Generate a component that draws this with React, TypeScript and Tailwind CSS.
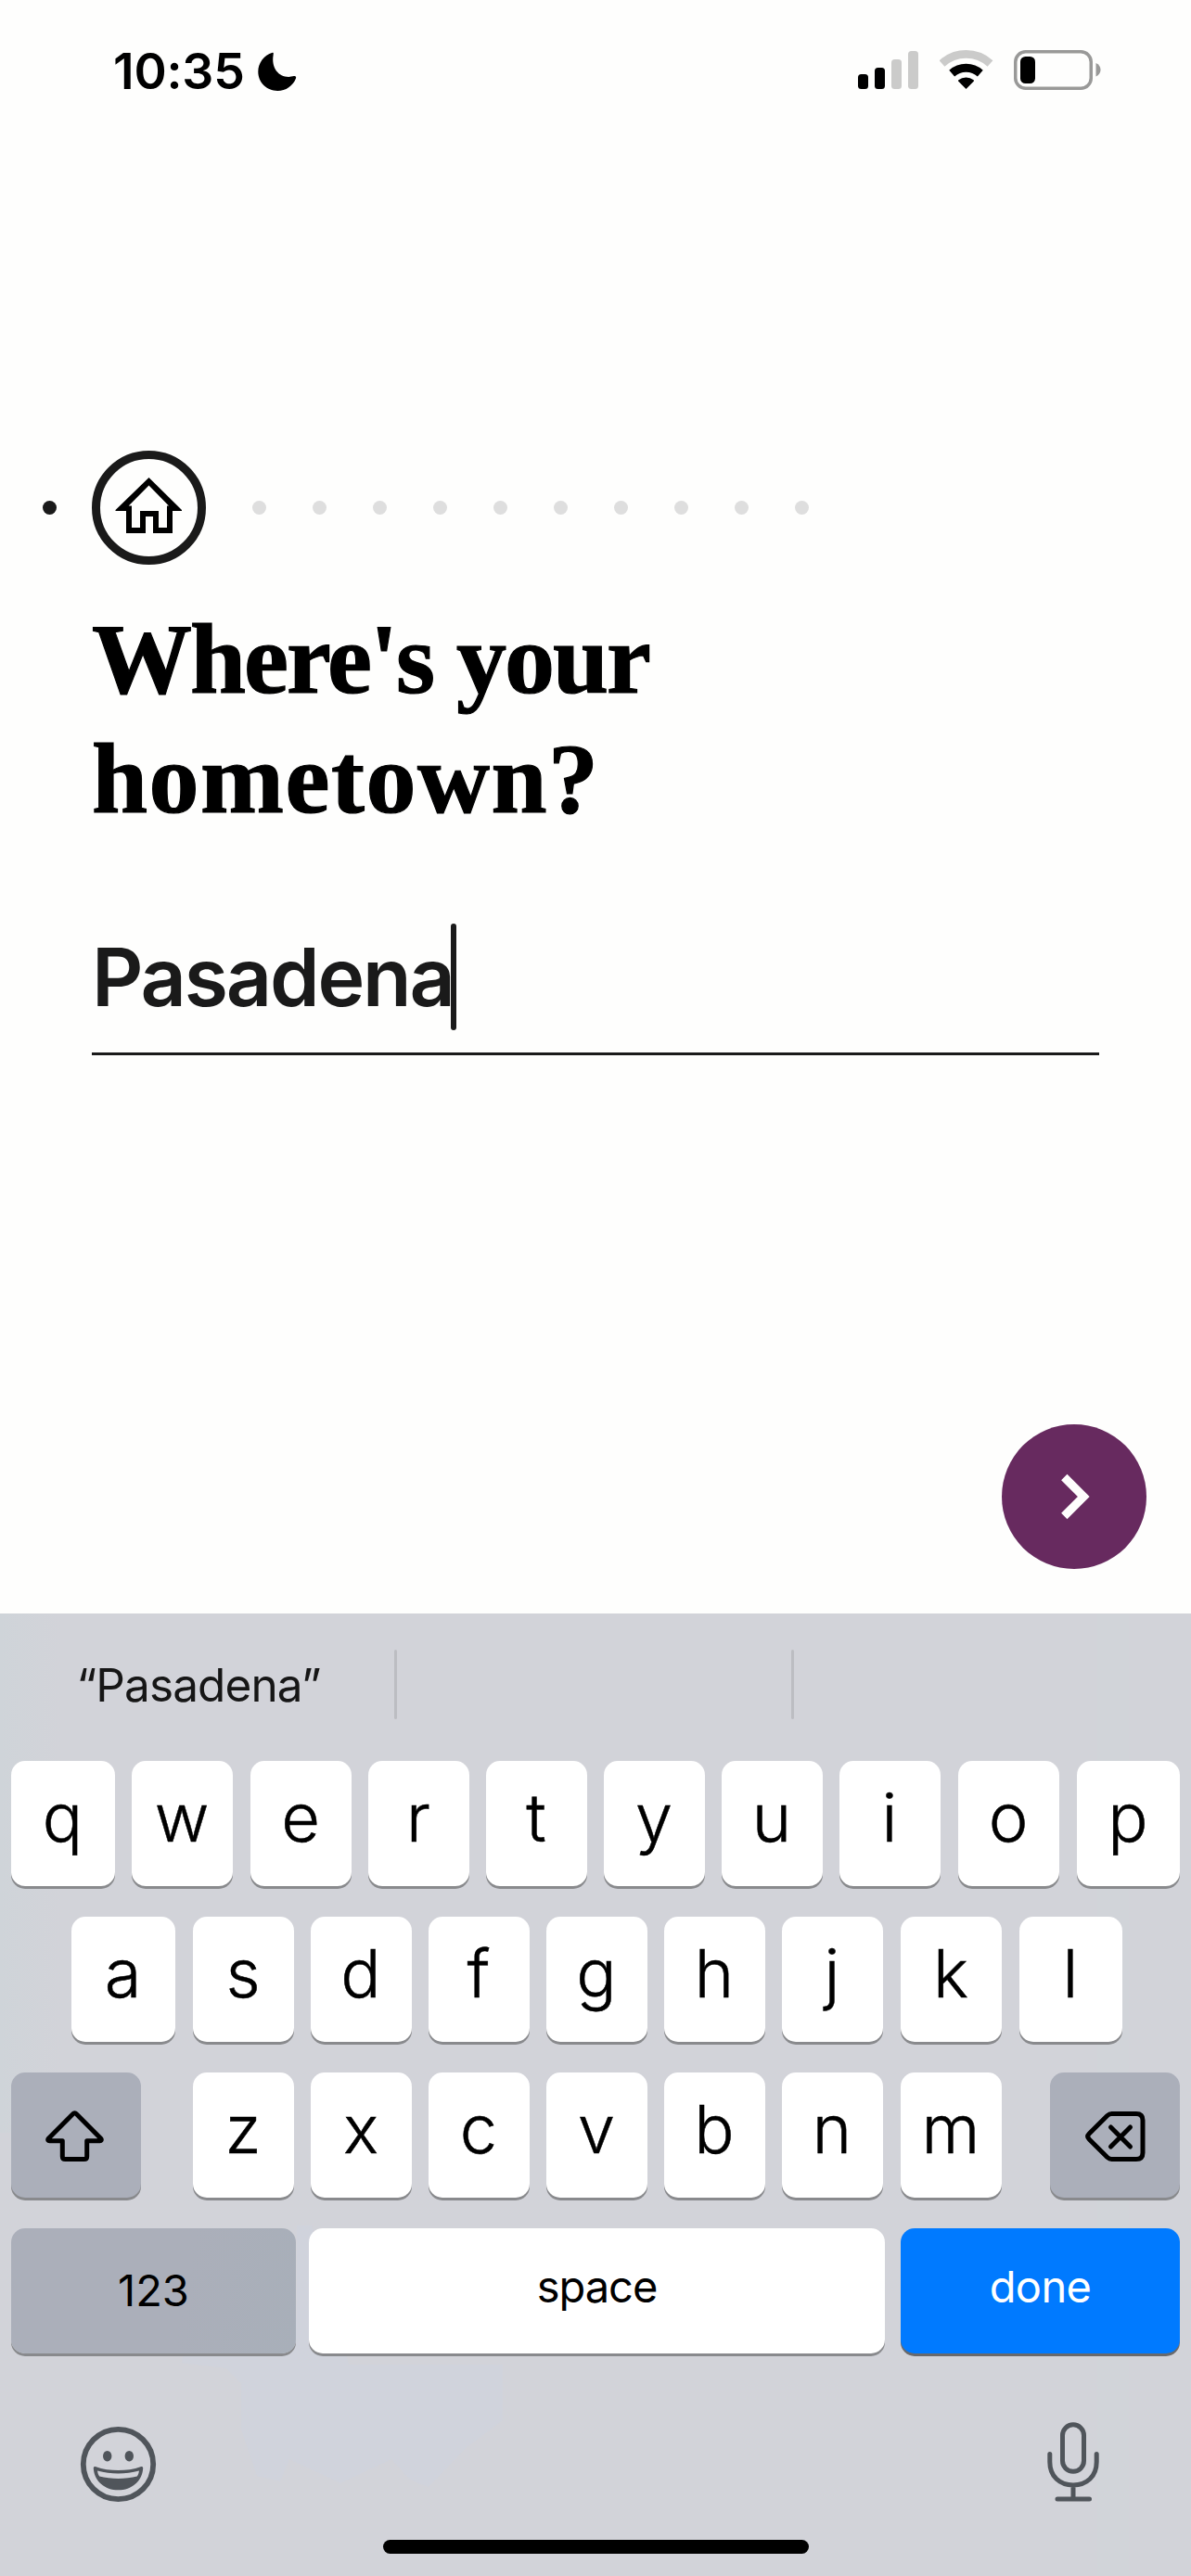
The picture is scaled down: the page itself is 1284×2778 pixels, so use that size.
import React from "react";

type KeyDef = { label: string; cls: string };

const ROW_ONE: KeyDef[] = [
  { label: "q", cls: "w-[112px]" },
  { label: "w", cls: "ml-[18px] w-[109px]" },
  { label: "e", cls: "ml-[19px] w-[109px]" },
  { label: "r", cls: "ml-[18px] w-[109px]" },
  { label: "t", cls: "ml-[18px] w-[109px]" },
  { label: "y", cls: "ml-[18px] w-[109px]" },
  { label: "u", cls: "ml-[18px] w-[109px]" },
  { label: "i", cls: "ml-[18px] w-[109px]" },
  { label: "o", cls: "ml-[19px] w-[109px]" },
  { label: "p", cls: "ml-[19px] w-[111px]" },
];

const ROW_TWO: KeyDef[] = [
  { label: "a", cls: "w-[112px]" },
  { label: "s", cls: "ml-[19px] w-[109px]" },
  { label: "d", cls: "ml-[18px] w-[109px]" },
  { label: "f", cls: "ml-[18px] w-[109px]" },
  { label: "g", cls: "ml-[18px] w-[109px]" },
  { label: "h", cls: "ml-[18px] w-[109px]" },
  { label: "j", cls: "ml-[18px] w-[109px]" },
  { label: "k", cls: "ml-[19px] w-[109px]" },
  { label: "l", cls: "ml-[19px] w-[111px]" },
];

const ROW_THREE: KeyDef[] = [
  { label: "z", cls: "ml-[56px] w-[109px]" },
  { label: "x", cls: "ml-[18px] w-[109px]" },
  { label: "c", cls: "ml-[18px] w-[109px]" },
  { label: "v", cls: "ml-[18px] w-[109px]" },
  { label: "b", cls: "ml-[18px] w-[109px]" },
  { label: "n", cls: "ml-[18px] w-[109px]" },
  { label: "m", cls: "ml-[19px] w-[109px]" },
];

const KEY_BASE = "h-[135px] shrink-0 rounded-[15px] shadow-[0_3px_0_#898a8d] text-center";

function LetterKey({ label, cls }: KeyDef) {
  return (
    <button className={`${KEY_BASE} flex items-start justify-center bg-white pr-px text-[72px] leading-[121px] font-light text-black [-webkit-text-stroke:0.5px_#000] ${cls}`}>
      {label}
    </button>
  );
}

function StatusBar() {
  return (
    <header className="flex h-[153px] items-start">
      <div className="ml-[122px] w-[156px] text-[53.5px] leading-[153px] font-semibold tracking-[-0.2px] whitespace-nowrap text-black">
        10:35
      </div>
      <svg className="mt-[56px]" width="42" height="43" viewBox="0 0 42 43">
        <path
          d="M15.8.8C6.500 3.600.3 12 .3 21.300.3 33 9.600 42 21.300 42c8.700 0 16.600-5.600 19.700-13.600.7-1.800-.6-2.800-2.200-2.300-13.600 3.800-24.800-6.400-22.200-22.600C16.900 1.500 17 .4 15.800.8Z"
          fill="#000"
        />
      </svg>
      <svg className="mt-[55px] ml-[605px]" width="65" height="41" viewBox="0 0 65 41">
        <rect x="0" y="25" width="11" height="16" rx="3.500" fill="#000" />
        <rect x="18" y="18" width="11" height="23" rx="3.500" fill="#000" />
        <rect x="36" y="9" width="11" height="32" rx="3.500" fill="#cbcbca" />
        <rect x="54" y="0" width="11" height="41" rx="3.500" fill="#cbcbca" />
      </svg>
      <svg className="mt-[54px] ml-[23px]" width="58" height="43" viewBox="0 0 58 43">
        <path d="M2.500 15.500A38.500 38.500 0 0 1 54.500 15.500" fill="none" stroke="#cbcbca" strokeWidth="8.600" transform="translate(0 -1)" />
        <path d="M13.200 25.800A23 23 0 0 1 43.800 25.800" fill="none" stroke="#000" strokeWidth="8.800" transform="translate(0 -.7)" />
        <path d="M28.500 42 20.300 33.800a1 1 0 0 1 .1-1.500 13 13 0 0 1 16.200 0 1 1 0 0 1 .1 1.500Z" fill="#000" />
      </svg>
      <svg className="mt-[54px] ml-[22px]" width="95" height="43" viewBox="0 0 95 43">
        <rect x="1.750" y="1.750" width="81.500" height="39.500" rx="11" fill="none" stroke="#999998" strokeWidth="3.500" />
        <rect x="7" y="7" width="16" height="29" rx="5.500" fill="#000" />
        <path d="M88.500 14c3.200 1.200 5 4.100 5 7.300s-1.800 6-5 7.200Z" fill="#999998" />
      </svg>
    </header>
  );
}

function Progress() {
  return (
    <div className="mt-[333px] flex h-[123px] items-center pl-[46px]">
      <span className="size-[15px] rounded-full bg-[#1a1a1a]" />
      <div className="ml-[38px] size-[123px] rounded-full border-[9px] border-[#1a1a1a]">
        <svg className="-m-[9px] max-w-none" width="123" height="123" viewBox="0 0 123 123">
          <path
            fillRule="evenodd"
            fill="#000"
            d="M61.500 29 97 64v1H87v24H66V71h-8v18H37V65H25.500v-1ZM61.500 37.500 39.700 59.500H43V83h9V65h20v18h9V59.500h2Z"
          />
        </svg>
      </div>
      <div className="ml-[50px] flex gap-[50px]">
        {Array.from({ length: 10 }, (_, i) => (
          <span key={i} className="size-[15px] rounded-full bg-[#dedede]" />
        ))}
      </div>
    </div>
  );
}

function Keyboard() {
  return (
    <section className="relative h-[1038px] shrink-0 bg-[#d2d3d9]">
      <svg className="absolute inset-0" width="1284" height="1038" viewBox="0 0 1284 1038">
        <defs>
          <linearGradient id="edge" x1="0" x2="1">
            <stop offset="0" stopColor="#cfd4d9" />
            <stop offset="1" stopColor="#d2d3d9" />
          </linearGradient>
        </defs>
        <rect width="66" height="560" fill="url(#edge)" />
        <rect x="1183" width="34" height="1038" fill="#d1d4d9" />
        <path d="M320 660h16l40 150h166v60l-40 30-40 42-20-8-20-22-55 26-55-26-10 24-25-6-17-50v-50l-16-16-48-6 4-20 20-28h100Z" fill="#d0d3dc" />
      </svg>
      <div className="relative">
        <div className="flex h-[159px] items-start pt-[39px]">
          <div className="h-[75px] w-[425px] pl-[3px] text-center text-[49.5px] leading-[76px] tracking-[-0.9px] text-[#161616]">
            “Pasadena”
          </div>
          <span className="h-[75px] w-[3px] rounded-full bg-[#bcbdc2]" />
          <span className="ml-[425px] h-[75px] w-[3px] rounded-full bg-[#bcbdc2]" />
        </div>
        <div className="flex flex-col gap-[33px] pl-[12px]">
          <div className="flex">
            {ROW_ONE.map((k) => (
              <LetterKey key={k.label} {...k} />
            ))}
          </div>
          <div className="flex pl-[65px]">
            {ROW_TWO.map((k) => (
              <LetterKey key={k.label} {...k} />
            ))}
          </div>
          <div className="flex">
            <button aria-label="shift" className={`${KEY_BASE} w-[140px] bg-[#abafba]`}>
              <svg width="140" height="135" viewBox="0 0 140 135" fill="none" stroke="#000" strokeWidth="5" strokeLinejoin="round">
                <path d="M66.600 44.800Q68.500 42.800 70.400 44.800L97 71.500Q98 73.500 95.500 73.700H81.700V90.500Q81.700 93.500 78.700 93.500H58.300Q55.300 93.500 55.300 90.500V73.700H41.500Q39 73.500 40 71.500Z" />
              </svg>
            </button>
            {ROW_THREE.map((k) => (
              <LetterKey key={k.label} {...k} />
            ))}
            <button aria-label="delete" className={`${KEY_BASE} ml-[52px] w-[140px] bg-[#abafba]`}>
              <svg width="140" height="135" viewBox="0 0 140 135" fill="none" stroke="#000" strokeWidth="5" strokeLinecap="round" strokeLinejoin="round">
                <path d="M66.500 44.500H93Q100 44.500 100 51.500V86.500Q100 93.500 93 93.500H66.500Q64 93.500 61.800 91.500L42.200 72Q39.200 69 42.200 66L61.800 46.500Q64 44.500 66.500 44.500Z" />
                <path d="m65.500 59 21 21m0-21-21 21" />
              </svg>
            </button>
          </div>
          <div className="flex">
            <button className={`${KEY_BASE} flex w-[307px] items-start justify-center bg-[linear-gradient(100deg,#abafba_60%,#a8afb9)] text-[47px] leading-[133px]`}>
              123
            </button>
            <button className={`${KEY_BASE} ml-[14px] flex w-[621px] items-start justify-center bg-white text-[47px] leading-[126px] tracking-[-1px]`}>
              space
            </button>
            <button className="ml-[17px] flex h-[135px] w-[301px] items-start justify-center rounded-[15px] bg-[#007aff] text-[47px] leading-[126px] tracking-[-0.6px] text-white shadow-[0_3px_0_#68696c]">
              done
            </button>
          </div>
        </div>
        <div className="mt-[72px] flex items-start justify-between pr-[97px] pl-[86px]">
          <svg className="mt-[6px]" width="83" height="83" viewBox="0 0 83 83">
            <circle cx="41.500" cy="41.500" r="37.700" fill="none" stroke="#50555b" strokeWidth="5.800" />
            <ellipse cx="29.700" cy="32.700" rx="4.700" ry="5.800" fill="#50555b" />
            <ellipse cx="53.300" cy="32.700" rx="4.700" ry="5.800" fill="#50555b" />
            <path
              fillRule="evenodd"
              fill="#50555b"
              d="M16.800 44c8.200 3 16.500 4 24.700 4s16.500-1 24.700-4c1.400-.4 2.100.4 2 1.900C67.300 59.600 56 69.300 41.500 69.300S15.700 59.600 14.800 45.900c-.1-1.500.6-2.300 2-1.900Zm2.200 4.500c.4 2.500 1 4.500 2.200 6.100 5.800 1.700 13.500 2.400 20.300 2.400s14.500-.7 20.300-2.400c1.200-1.600 1.800-3.600 2.200-6.100-7.400 2.100-15 2.900-22.500 2.900s-15.100-.8-22.500-2.900Z"
            />
          </svg>
          <svg className="mt-px" width="60" height="88" viewBox="0 0 60 88" fill="none" stroke="#50555b" strokeWidth="5" strokeLinecap="round">
            <rect x="18.500" y="3.800" width="23" height="50.500" rx="11.500" />
            <path d="M4.800 35.500V44c0 15.500 10.500 25 25.200 25s25.200-9.500 25.200-25v-8.500M30 69v14.500M13 84h34.500" />
          </svg>
        </div>
        <div className="mt-[40px] ml-[413px] h-[15px] w-[459px] rounded-full bg-black" />
      </div>
    </section>
  );
}

export default function App() {
  return (
    <main className="flex h-[2778px] w-[1284px] flex-col overflow-hidden bg-[#fefefd] font-['Inter','Liberation_Sans',sans-serif] text-black">
      <StatusBar />
      <Progress />
      <h1 className="mt-[38px] ml-[99px] font-['Liberation_Serif',serif] text-[108px] leading-[128.500px] font-bold whitespace-nowrap [-webkit-text-stroke:1.2px_#000]">
        <span className="block tracking-[-2px]">Where's your</span>
        <span className="block tracking-[1.500px]">hometown?</span>
      </h1>
      <div className="mt-[92px] ml-[99px] flex h-[142px] w-[1086px] items-start border-b-[3px] border-[#1a1a1a]">
        <span className="w-[387px] text-[86px] leading-[116px] font-semibold tracking-[-2.2px] whitespace-nowrap text-[#1a1a1a]">
          Pasadena
        </span>
        <span className="h-[115px] w-[6px] rounded-full bg-[#1a1a1a]" />
      </div>
      <button aria-label="next" className="mt-auto mr-[48px] mb-[48px] size-[156px] shrink-0 self-end rounded-full bg-[#672a5f]">
        <svg width="156" height="156" viewBox="0 0 156 156" fill="none" stroke="#fefefd" strokeWidth="9">
          <path d="M67.300 57 88.300 78 67.300 99" />
        </svg>
      </button>
      <Keyboard />
    </main>
  );
}
